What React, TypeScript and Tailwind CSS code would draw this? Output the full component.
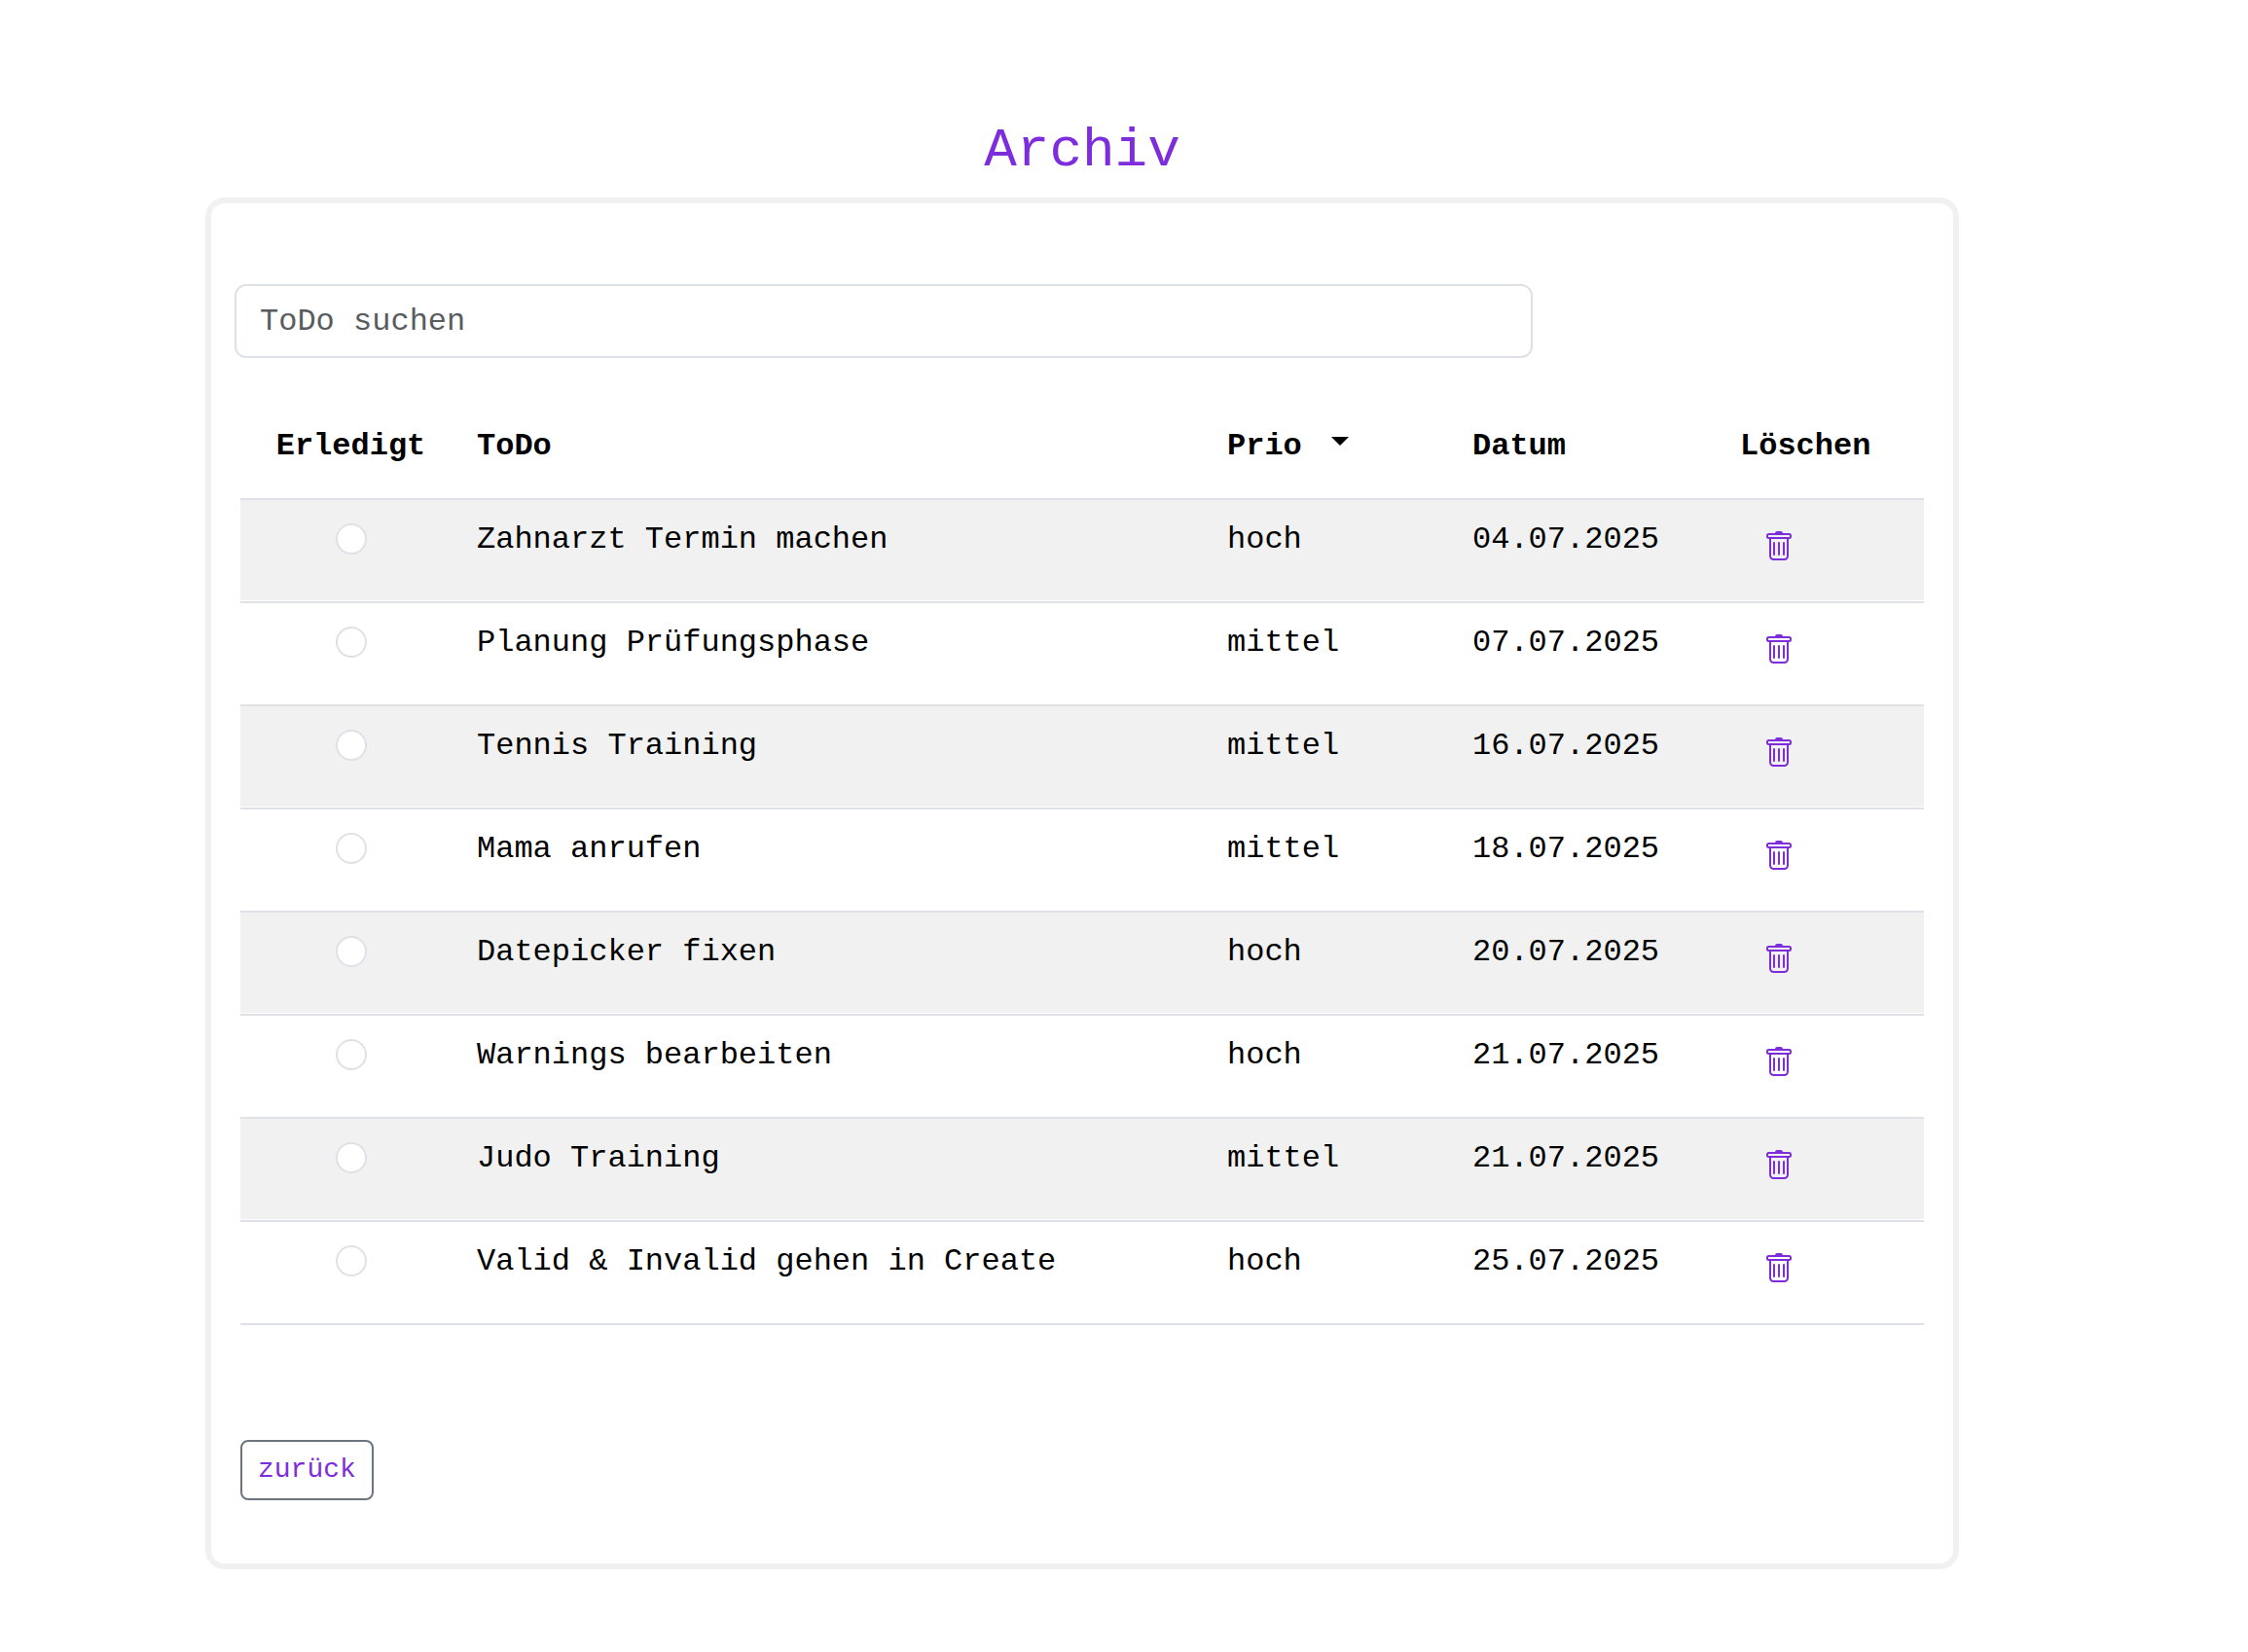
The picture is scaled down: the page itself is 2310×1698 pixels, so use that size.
import { useState } from "react";

type Prio = "hoch" | "mittel";

interface Todo {
  id: number;
  title: string;
  prio: Prio;
  date: string;
}

const initialTodos: Todo[] = [
  { id: 1, title: "Zahnarzt Termin machen", prio: "hoch", date: "04.07.2025" },
  { id: 2, title: "Planung Prüfungsphase", prio: "mittel", date: "07.07.2025" },
  { id: 3, title: "Tennis Training", prio: "mittel", date: "16.07.2025" },
  { id: 4, title: "Mama anrufen", prio: "mittel", date: "18.07.2025" },
  { id: 5, title: "Datepicker fixen", prio: "hoch", date: "20.07.2025" },
  { id: 6, title: "Warnings bearbeiten", prio: "hoch", date: "21.07.2025" },
  { id: 7, title: "Judo Training", prio: "mittel", date: "21.07.2025" },
  { id: 8, title: "Valid & Invalid gehen in Create", prio: "hoch", date: "25.07.2025" },
];

function TrashIcon() {
  return (
    <svg
      viewBox="0 0 26 30"
      className="block h-[30px] w-[26px]"
      fill="none"
      stroke="currentColor"
      strokeWidth="2"
      strokeLinecap="round"
      strokeLinejoin="round"
      aria-hidden="true"
    >
      <path d="M9 2.5C9 .8 10 0 11.2 0h3.6C16 0 17 .8 17 2.5z" fill="currentColor" stroke="none" />
      <rect x="1" y="3" width="24" height="4" rx="1.5" />
      <path d="M4 7v18.5A3.500 3.500 0 0 0 7.500 29h11A3.500 3.500 0 0 0 22 25.500V7" />
      <path d="M8 12v12M13 12v12M18 12v12" />
    </svg>
  );
}

function TodoRow({ todo, onDelete }: { todo: Todo; onDelete: () => void }) {
  return (
    <tr className="h-[106px] align-top odd:bg-[#f1f1f1] [&>td]:border-b-2 [&>td]:border-[#dee2e6] odd:[&>td]:shadow-[inset_0_-1px_0_#ffffff]">
      <td className="px-4 pt-6">
        <input
          type="checkbox"
          aria-label={`${todo.title} erledigt`}
          className="mx-auto block size-8 appearance-none rounded-full border-2 border-[#dee2e6] bg-white checked:bg-[#7d2ddb]"
        />
      </td>
      <td className="px-4 pt-[17px]">{todo.title}</td>
      <td className="px-4 pt-[17px]">{todo.prio}</td>
      <td className="px-4 pt-[17px]">{todo.date}</td>
      <td className="px-4 pt-4">
        <button type="button" onClick={onDelete} aria-label={`${todo.title} löschen`} className="px-[27px] py-4 text-[#7d2ddb]">
          <TrashIcon />
        </button>
      </td>
    </tr>
  );
}

export default function App() {
  const [todos, setTodos] = useState(initialTodos);
  const [query, setQuery] = useState("");
  const visible = todos.filter((t) => t.title.toLowerCase().includes(query.toLowerCase()));

  return (
    <main className="bg-white pt-[122px] pr-[297px] pb-[85px] pl-[211px] font-['Liberation_Mono',monospace] text-[32px] leading-[48px] text-black">
      <h1 className="mb-3.5 text-center text-[56px] leading-[67px] text-[#7d2ddb]">Archiv</h1>
      <section className="rounded-[20px] border-6 border-[#f1f1f1] pt-[83px] pb-[65px]">
        <div className="ml-3">
          <input
            type="search"
            aria-label="ToDo suchen"
            placeholder="ToDo suchen"
            value={query}
            onChange={(e) => setQuery(e.target.value)}
            className="ml-3 block h-[76px] w-3/4 rounded-xl border-2 border-[#dee2e6] bg-white px-6 placeholder:text-[#595c5f]"
          />
        </div>
        <div className="mx-[30px] mt-[67px]">
          <table className="w-full table-fixed border-separate border-spacing-0 text-left">
            <colgroup>
              <col className="w-[227px]" />
              <col />
              <col className="w-[252px]" />
              <col className="w-[275px]" />
              <col className="w-[205px]" />
            </colgroup>
            <thead>
              <tr className="[&>th]:border-b-2 [&>th]:border-[#dee2e6] [&>th]:px-4 [&>th]:pb-[29px]">
                <th scope="col" className="text-center">Erledigt</th>
                <th scope="col">ToDo</th>
                <th scope="col">
                  <button type="button" className="flex items-center gap-[30px] font-bold">
                    Prio
                    <svg viewBox="0 0 18 9" className="mb-3 h-[9px] w-[18px]" fill="currentColor" aria-hidden="true">
                      <path d="M0 0h18L9 9z" />
                    </svg>
                  </button>
                </th>
                <th scope="col">Datum</th>
                <th scope="col">Löschen</th>
              </tr>
            </thead>
            <tbody>
              {visible.map((todo) => (
                <TodoRow
                  key={todo.id}
                  todo={todo}
                  onDelete={() => setTodos((list) => list.filter((t) => t.id !== todo.id))}
                />
              ))}
            </tbody>
          </table>
          <button
            type="button"
            className="mt-[118px] block h-[62px] rounded-lg border-2 border-[#6c757d] px-4 text-[28px] leading-[42px] text-[#7d2ddb]"
          >
            zurück
          </button>
        </div>
      </section>
    </main>
  );
}
